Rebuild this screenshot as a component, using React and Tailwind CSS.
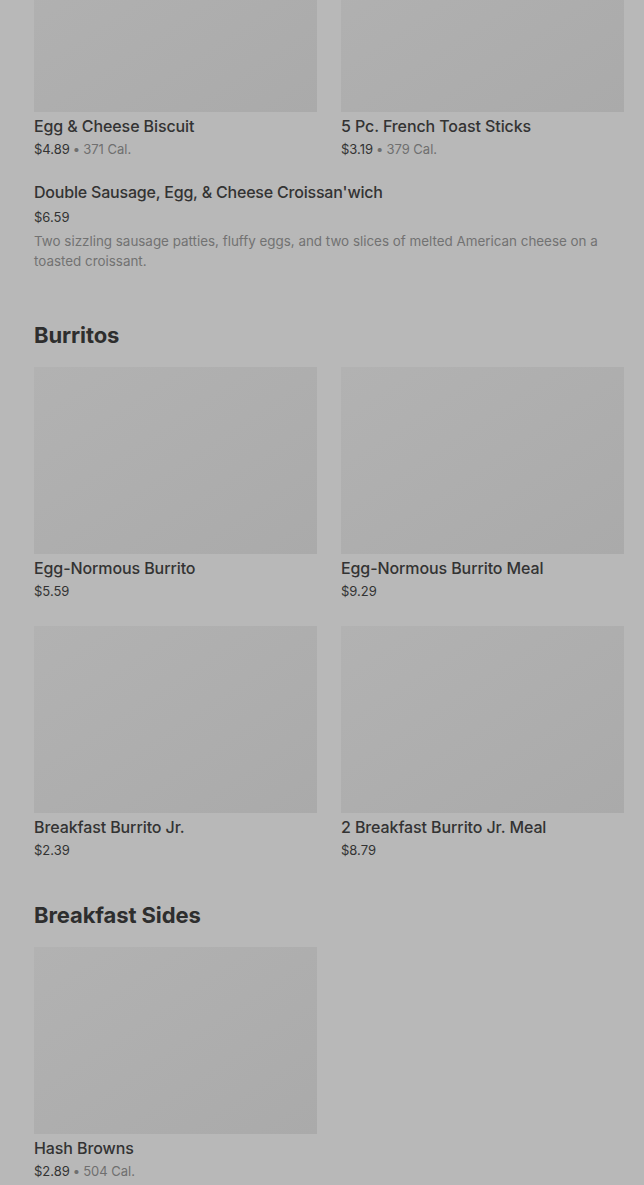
const font = { fontFamily: 'Inter, "Noto Sans", sans-serif' };

function Card({ name, price, cal }) {
  return (
    <div>
      <div className="h-[187px] bg-gradient-to-br from-[#b2b2b2] to-[#aaaaaa]" />
      <div className="mt-1 text-[16px] leading-[20px] font-medium text-[#333333] tracking-[-0.1px]">{name}</div>
      <div className="mt-1 text-[13px] leading-[18px] text-[#333333]">
        {price}
        {cal && (
          <span className="text-[#6f6f6f]">
            <span className="mx-[3px]">•</span>
            {cal}
          </span>
        )}
      </div>
    </div>
  );
}

function Heading({ children, className }) {
  return (
    <h2 className={"text-[22px] leading-[28px] font-bold tracking-[-0.1px] text-[#2e2e2e] " + className}>
      {children}
    </h2>
  );
}

export default function App() {
  return (
    <div className="min-h-[1185px] bg-[#b8b8b8] overflow-hidden pl-[34px] pr-[20px]" style={font}>
      <div className="-mt-[75px] grid grid-cols-2 gap-x-[24px]">
        <Card name="Egg & Cheese Biscuit" price="$4.89" cal="371 Cal." />
        <Card name="5 Pc. French Toast Sticks" price="$3.19" cal="379 Cal." />
      </div>

      <div className="mt-[22px]">
        <div className="text-[16px] leading-[24px] font-medium text-[#333333] tracking-[-0.2px]">
          Double Sausage, Egg, &amp; Cheese Croissan'wich
        </div>
        <div className="mt-[3px] text-[13px] leading-[20px] text-[#333333]">$6.59</div>
        <p className="mt-[4px] text-[13.4px] leading-[20px] text-[#727272] pr-[20px]">
          Two sizzling sausage patties, fluffy eggs, and two slices of melted American cheese on a toasted croissant.
        </p>
      </div>

      <Heading className="mt-[50px]">Burritos</Heading>
      <div className="mt-[18px] grid grid-cols-2 gap-x-[24px] gap-y-[26px]">
        <Card name="Egg-Normous Burrito" price="$5.59" />
        <Card name="Egg-Normous Burrito Meal" price="$9.29" />
        <Card name="Breakfast Burrito Jr." price="$2.39" />
        <Card name="2 Breakfast Burrito Jr. Meal" price="$8.79" />
      </div>

      <Heading className="mt-[42px]">Breakfast Sides</Heading>
      <div className="mt-[18px] grid grid-cols-2 gap-x-[24px]">
        <Card name="Hash Browns" price="$2.89" cal="504 Cal." />
      </div>
    </div>
  );
}
